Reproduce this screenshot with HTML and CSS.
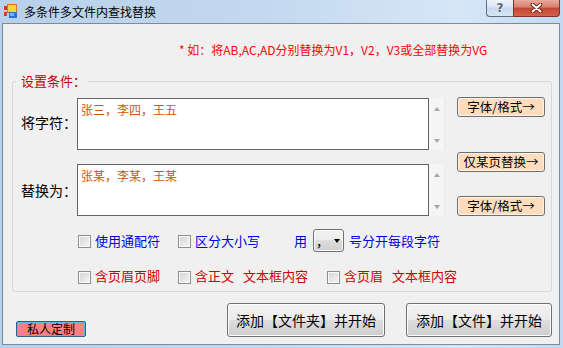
FILE: index.html
```html
<!DOCTYPE html>
<html lang="zh-CN">
<head>
    <meta charset="UTF-8">
    <meta name="viewport" content="width=device-width, initial-scale=1.0">
    <title>多条件多文件内查找替换</title>
    <link rel="stylesheet" href="styles.css">
</head>
<body>

<div class="window">
    <div class="titlebar">
        <svg class="app-icon" width="14" height="14" viewBox="0 0 14 14">
            <rect x="0" y="2" width="3" height="4" fill="#d23a1e"/>
            <rect x="0" y="8" width="3" height="4" fill="#d23a1e"/>
            <rect x="3.5" y="0.5" width="9" height="8" fill="#f7d23a" stroke="#d9751c"/>
            <rect x="5" y="8" width="8" height="6" fill="#2f6fd6"/>
            <rect x="6" y="9" width="4" height="3" fill="#7fb0f0"/>
        </svg>
        <span class="title">多条件多文件内查找替换</span>
        <div class="caption-buttons">
            <div class="cap-btn help">?</div>
            <div class="cap-btn close">
                <svg width="13" height="10" viewBox="0 0 13 10">
                    <path d="M2.5 1.5 L10.5 8.5 M10.5 1.5 L2.5 8.5" stroke="#6a2418" stroke-width="4" stroke-linecap="round"/>
                    <path d="M2.5 1.5 L10.5 8.5 M10.5 1.5 L2.5 8.5" stroke="#fff" stroke-width="2" stroke-linecap="round"/>
                </svg>
            </div>
        </div>
    </div>

    <div class="client">
        <p class="hint">* 如：将AB,AC,AD分别替换为V1，V2，V3或全部替换为VG</p>

        <fieldset class="group">
            <legend>设置条件：</legend>

            <div class="editor">
                <div class="fields">
                    <div class="field first">
                        <label class="field-label">将字符：</label>
                        <div class="textbox">张三，李四，王五</div>
                        <div class="vscroll"><span class="arrow up"></span><span class="arrow down"></span></div>
                    </div>
                    <div class="field second">
                        <label class="field-label">替换为：</label>
                        <div class="textbox">张某，李某，王某</div>
                        <div class="vscroll"><span class="arrow up"></span><span class="arrow down"></span></div>
                    </div>
                </div>
                <div class="side-buttons">
                    <button class="peach">字体/格式→</button>
                    <button class="peach page-btn">仅某页替换→</button>
                    <button class="peach font-btn2">字体/格式→</button>
                </div>
            </div>

            <div class="options blue first-row">
                <div class="opt opt-a"><span class="checkbox"></span>使用通配符</div>
                <div class="opt opt-b"><span class="checkbox"></span>区分大小写</div>
                <span class="sep-text">用</span>
                <div class="combo"><span class="combo-value">，</span><span class="combo-arrow"></span></div>
                <span class="sep-text after">号分开每段字符</span>
            </div>

            <div class="options red second-row">
                <div class="opt opt-a"><span class="checkbox"></span>含页眉页脚</div>
                <div class="opt opt-c"><span class="checkbox"></span>含正文<span class="gap">文本框内容</span></div>
                <div class="opt"><span class="checkbox"></span>含页眉<span class="gap">文本框内容</span></div>
            </div>
        </fieldset>

        <div class="actions">
            <button class="custom">私人定制</button>
            <button class="big folder">添加【文件夹】并开始</button>
            <button class="big file">添加【文件】并开始</button>
        </div>
    </div>
</div>

</body>
</html>
```

FILE: styles.css
```css
body {
    margin: 0;
    font-family: "Noto Sans CJK SC", "Noto Sans", sans-serif;
    background: #c3d8ef;
}
.window {
    width: 563px;
    height: 348px;
    display: flex;
    flex-direction: column;
    background: linear-gradient(90deg, #b8d0ea 0%, #c2d8ef 45%, #d6e6f7 82%, #c4d9ef 100%);
}
.titlebar {
    height: 23px;
    display: flex;
    align-items: center;
    flex-shrink: 0;
}
.app-icon {
    margin-left: 4px;
    margin-top: -1px;
}
.title {
    margin-left: 6px;
    font-size: 12px;
    line-height: 16px;
    color: #000;
}
.caption-buttons {
    margin-left: auto;
    margin-right: 3px;
    align-self: flex-start;
    display: flex;
}
.cap-btn {
    height: 17px;
    box-sizing: border-box;
    border: 1px solid #5c6d85;
    border-top: none;
    display: flex;
    align-items: center;
    justify-content: center;
}
.help {
    width: 27px;
    border-right: none;
    border-radius: 0 0 0 4px;
    background: linear-gradient(#eef4fb, #dbe6f4 45%, #c6d8ed 50%, #d8e6f5);
    font: bold 12px "DejaVu Sans", sans-serif;
    color: #55616f;
    text-shadow: 0 0 1px #fff, 0 0 1px #fff;
}
.close {
    width: 47px;
    border-color: #7c3328;
    border-radius: 0 0 4px 0;
    background: linear-gradient(#e8ab9e, #d8806f 45%, #c44631 50%, #d4624d);
}
.client {
    flex: 1;
    margin: 0 3px 3px 2px;
    border: 1px solid #7b8ca0;
    background: #f0f0f0;
    display: flex;
    flex-direction: column;
}
.hint {
    margin: 0;
    padding: 18px 0 0 176px;
    font-size: 12px;
    line-height: 16px;
    color: #f00;
}
.group {
    margin: 15px 7px 0 9px;
    padding: 0 0 6px 0;
    min-width: 0;
    border: 1px solid #d3d9de;
    border-radius: 3px;
}
.group legend {
    margin-left: 3px;
    padding: 0 2px 0 5px;
    font-size: 13px;
    line-height: 16px;
    color: #c00000;
}
.editor {
    display: flex;
    margin-top: 8px;
}
.fields {
    display: flex;
    flex-direction: column;
}
.field {
    display: flex;
    height: 52px;
}
.field.first {
    margin-top: 1px;
}
.field.second {
    margin-top: 14px;
}
.field-label {
    width: 64px;
    box-sizing: border-box;
    padding-left: 8px;
    font-size: 14px;
    line-height: 18px;
    white-space: nowrap;
    align-self: center;
    color: #000;
}
.field.first .field-label {
    margin-top: -4px;
}
.textbox {
    width: 352px;
    box-sizing: border-box;
    border: 1px solid #646464;
    background: #fff;
    padding: 3px 3px;
    font-size: 12px;
    line-height: 15px;
    color: #cc5410;
}
.vscroll {
    width: 16px;
    background: #f5f5f5;
    border-right: 1px solid #ebebeb;
    box-sizing: border-box;
    display: flex;
    flex-direction: column;
    align-items: center;
    justify-content: space-between;
    padding: 9px 0 7px;
}
.arrow {
    width: 0;
    height: 0;
    border-left: 3.5px solid transparent;
    border-right: 3.5px solid transparent;
}
.arrow.up {
    border-bottom: 4px solid #a6a6a6;
}
.arrow.down {
    border-top: 4px solid #a6a6a6;
}
.side-buttons {
    display: flex;
    flex-direction: column;
    margin-left: 12px;
}
.peach {
    width: 88px;
    height: 20px;
    padding: 0;
    border: 1px solid #707070;
    border-radius: 3px;
    background: #ffdcbc;
    box-shadow: inset 0 0 0 1px #fbf3ec;
    font-family: "Noto Sans CJK SC", sans-serif;
    font-size: 12.5px;
    line-height: 16px;
    color: #000;
}
.page-btn {
    margin-top: 35px;
}
.font-btn2 {
    margin-top: 24px;
}
.options {
    display: flex;
    align-items: center;
    padding-left: 65px;
    font-size: 13px;
    line-height: 18px;
}
.options.blue {
    color: #0000e6;
}
.options.red {
    color: #d00000;
}
.first-row {
    margin-top: 13px;
    height: 23px;
}
.second-row {
    margin-top: 15px;
    height: 18px;
}
.opt {
    display: flex;
    align-items: center;
}
.opt-a {
    width: 100px;
}
.opt-b {
    width: 116px;
}
.opt-c {
    width: 149px;
}
.checkbox {
    width: 13px;
    height: 13px;
    box-sizing: border-box;
    margin: 2px 4px 0 0;
    border: 1px solid #8e8f8f;
    background: linear-gradient(135deg, #d2d4d7, #f6f6f6);
    box-shadow: inset 0 0 0 1px #fafafa;
    flex-shrink: 0;
}
.gap {
    margin-left: 9px;
}
.sep-text {
    color: #0000e6;
}
.sep-text.after {
    margin-left: 5px;
}
.combo {
    width: 31px;
    height: 23px;
    box-sizing: border-box;
    margin-left: 6px;
    border: 1px solid #707070;
    border-radius: 3px;
    background: linear-gradient(#f2f2f2, #ebebeb 50%, #dddddd 50%, #cfcfcf);
    box-shadow: inset 0 0 0 1px #fbfbfb;
    display: flex;
    align-items: center;
    padding-left: 2px;
}
.combo-value {
    color: #000;
    font-size: 13px;
    width: 16px;
}
.combo-arrow {
    width: 0;
    height: 0;
    margin-left: 2px;
    border-left: 3.5px solid transparent;
    border-right: 3.5px solid transparent;
    border-top: 4px solid #000;
}
.actions {
    display: flex;
    align-items: flex-end;
    margin-top: 11px;
    padding: 0 7px 0 13px;
}
.custom {
    width: 70px;
    height: 16px;
    padding: 0;
    border: 1px solid #2c628b;
    border-radius: 2px;
    background: #ff8080;
    box-shadow: inset 0 0 0 1px #5fb6e6;
    font-family: "Noto Sans CJK SC", sans-serif;
    font-size: 12px;
    line-height: 14px;
    color: #000;
}
.big {
    height: 34px;
    padding: 0;
    border: 1px solid #707070;
    border-radius: 3px;
    background: linear-gradient(#f2f2f2, #ebebeb 50%, #dddddd 50%, #cfcfcf);
    box-shadow: inset 0 0 0 1px #fcfcfc;
    font-family: "Noto Sans CJK SC", sans-serif;
    font-size: 14px;
    color: #000;
}
.folder {
    width: 158px;
    margin-left: auto;
}
.file {
    width: 146px;
    margin-left: 21px;
}
```
